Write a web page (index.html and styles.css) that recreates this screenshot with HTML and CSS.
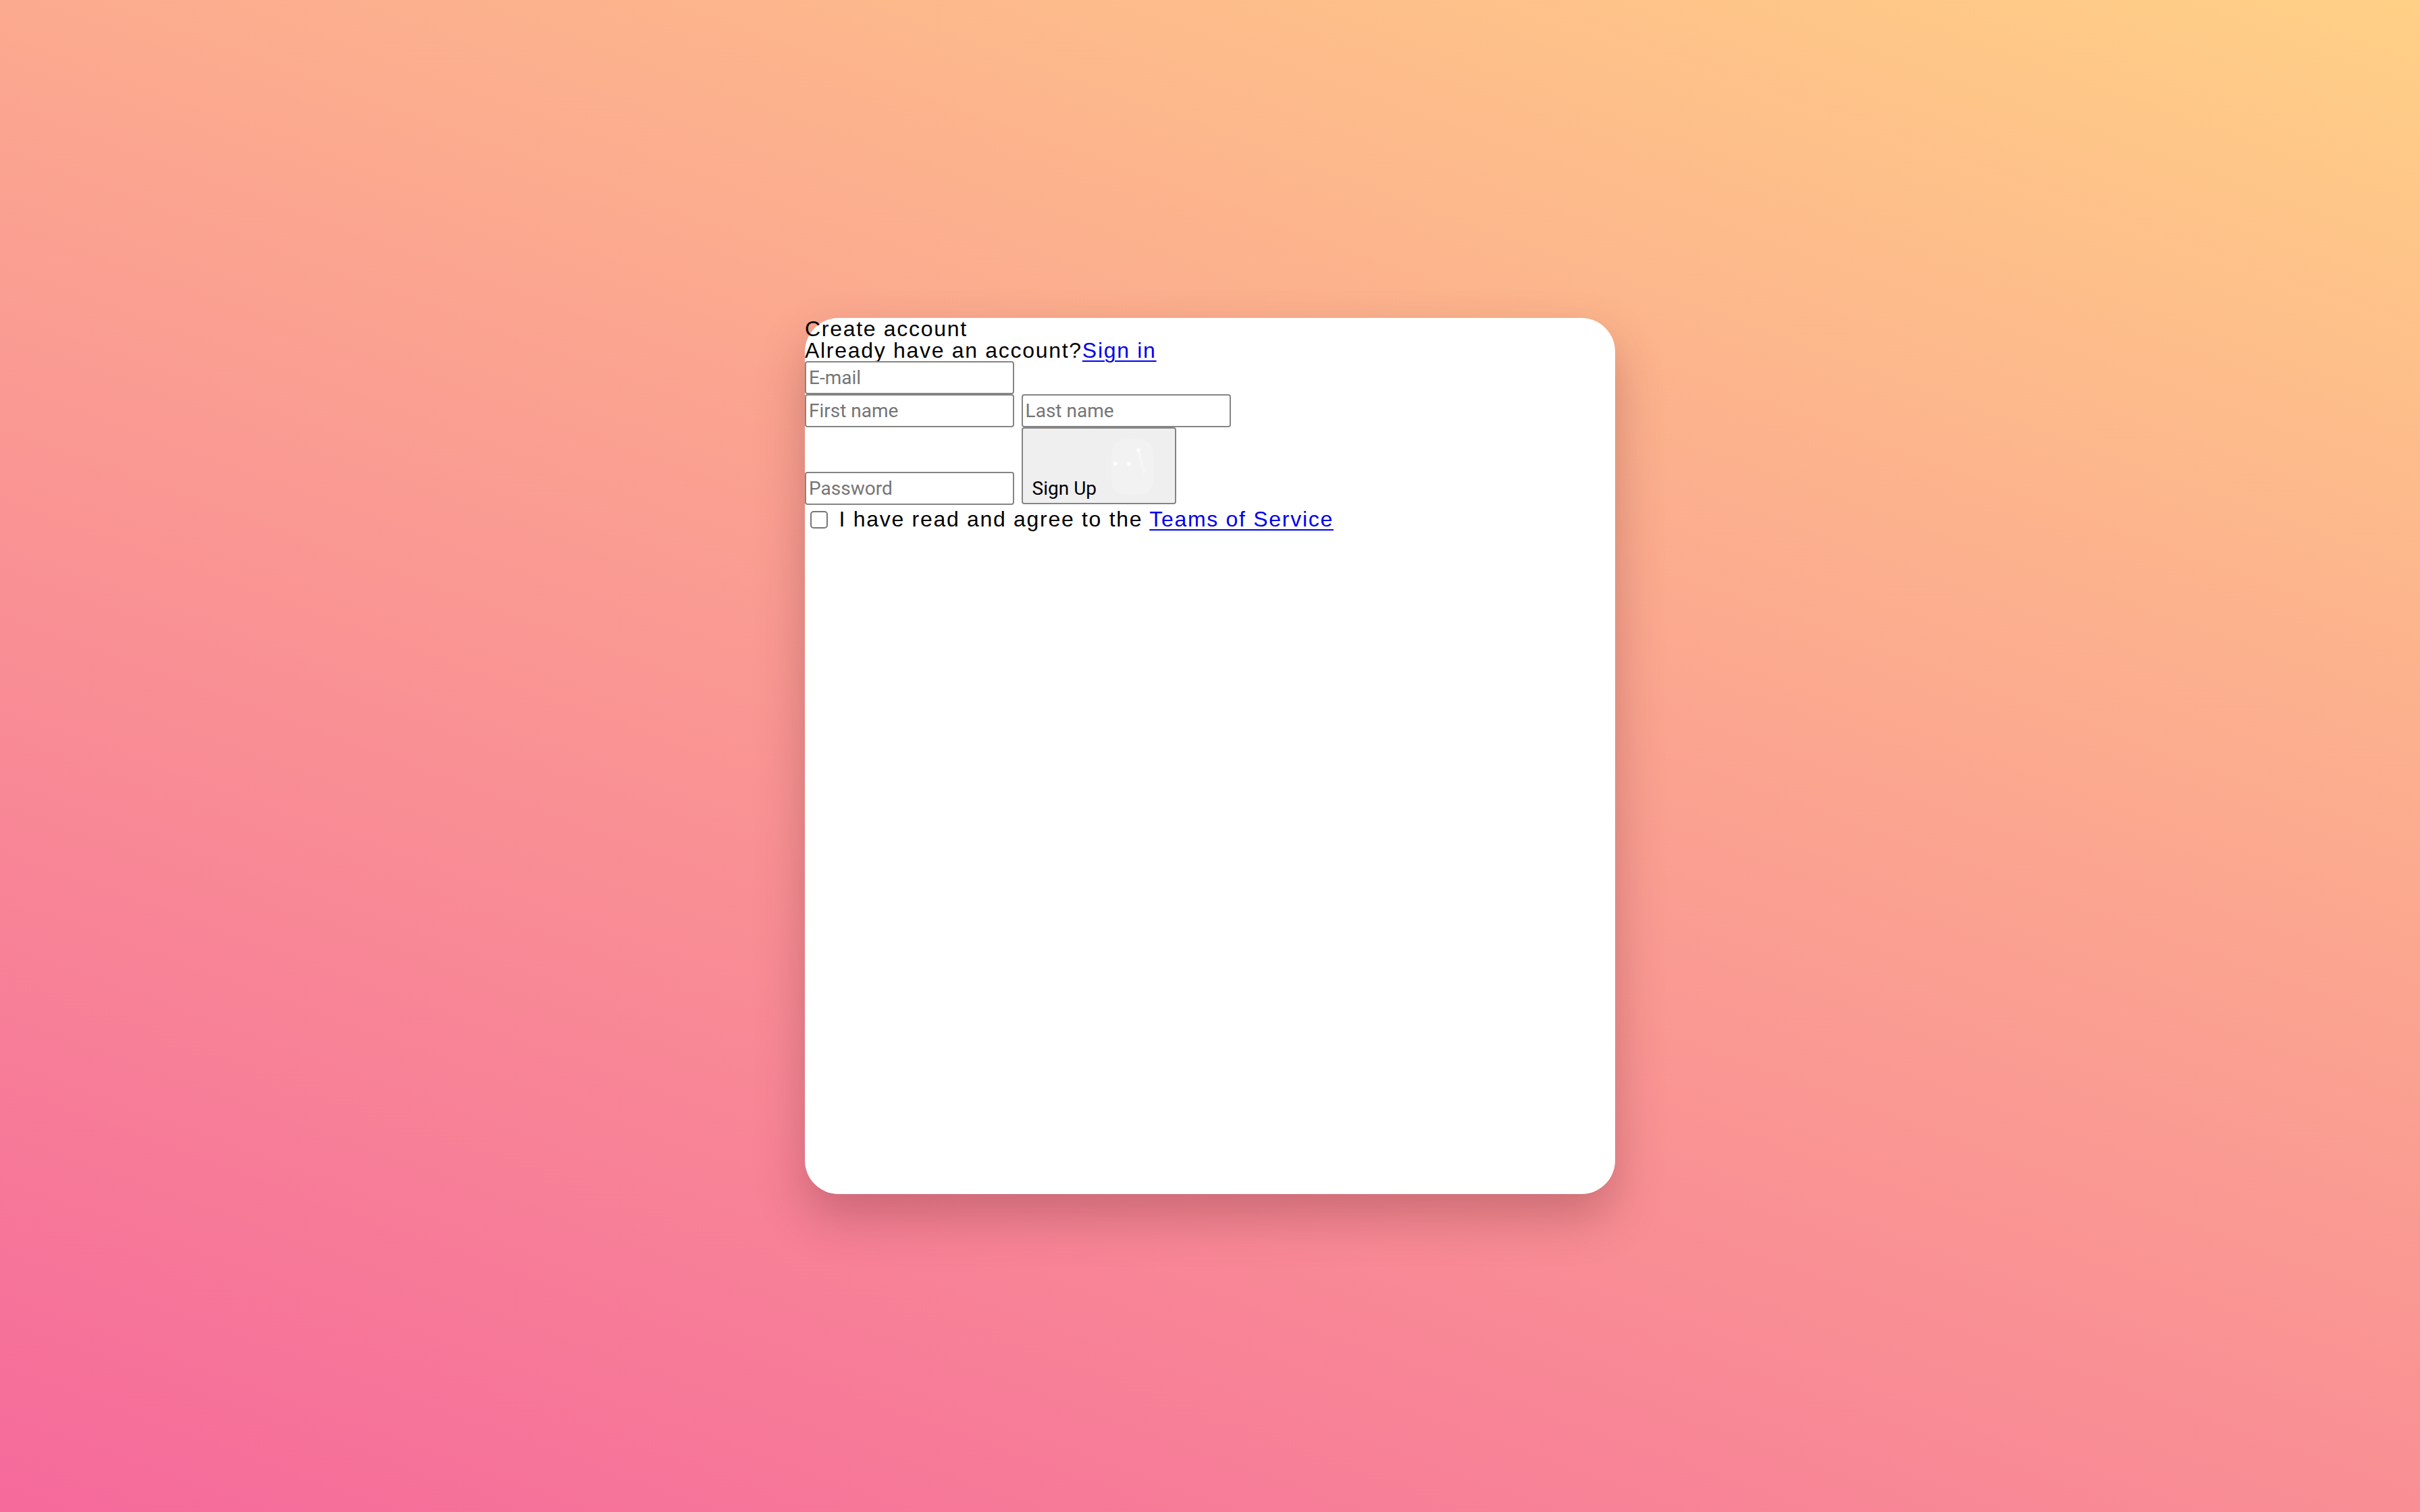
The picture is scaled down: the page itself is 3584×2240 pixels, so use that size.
FILE: index.html
```html
<!DOCTYPE html>
<html lang="en">
<head>
<meta charset="utf-8">
<title>Create account</title>
<link rel="stylesheet" href="styles.css">
</head>
<body>
<main class="page">
  <form class="card">
    <div class="line">Create account</div>
    <div class="line">Already have an account?<a href="#" class="link">Sign in</a></div>
    <div class="row"><input class="field" type="email" placeholder="E-mail"></div>
    <div class="row"><input class="field" type="text" placeholder="First name"> <input class="field" type="text" placeholder="Last name"></div>
    <div class="row"><input class="field" type="password" placeholder="Password"> <button class="submit" type="button">Sign Up<svg class="spark" viewBox="0 0 104 96" aria-hidden="true"><rect x="22" y="14" width="62" height="82" rx="20" fill="#ffffff" opacity="0.18"/><circle cx="28" cy="50" r="3" fill="#ffffff" opacity="0.8"/><circle cx="48" cy="50" r="3" fill="#ffffff" opacity="0.8"/><circle cx="62" cy="30" r="3" fill="#ffffff" opacity="0.8"/><path d="M62 30 L70 62" stroke="#ffffff" stroke-width="4" stroke-linecap="round" opacity="0.35"/></svg></button></div>
    <label class="row agree"><input class="check" type="checkbox"> I have read and agree to the <a class="link" href="#">Teams of Service</a></label>
  </form>
</main>
</body>
</html>
```

FILE: styles.css
```css
* {
  box-sizing: border-box;
}

html,
body {
  margin: 0;
  padding: 0;
}

body {
  font-family: "Liberation Sans", Arial, sans-serif;
  font-size: 32px;
  line-height: 32px;
  letter-spacing: 1.7px;
  color: #000;
}

.page {
  min-height: 100vh;
  display: flex;
  align-items: center;
  justify-content: center;
  background: linear-gradient(20deg, #f5699b 0%, #fa9c92 50%, #ffd086 100%);
}

.card {
  width: 1200px;
  height: 1298px;
  background: #fff;
  border-radius: 50px;
  box-shadow: 0 34px 70px rgba(110, 40, 50, 0.32);
}

.line {
  height: 32px;
  white-space: nowrap;
}

.row {
  display: block;
  white-space: nowrap;
}

.field {
  width: 310px;
  height: 49px;
  margin: 0;
  padding: 2px 4px;
  border: 2px solid #858585;
  border-radius: 4px;
  background: #fff;
  font-family: Roboto, "Liberation Sans", sans-serif;
  font-size: 28px;
  letter-spacing: 0;
  color: #000;
  vertical-align: baseline;
}

.field::placeholder {
  color: #757575;
}

.submit {
  margin: 0;
  padding: 2px 12px 2px 14px;
  border: 2px solid #858585;
  border-radius: 4px;
  background: #efefef;
  font-family: Roboto, "Liberation Sans", sans-serif;
  font-size: 28px;
  line-height: 38px;
  letter-spacing: 0;
  color: #000;
  vertical-align: baseline;
}

.spark {
  width: 104px;
  height: 96px;
  vertical-align: baseline;
}

.agree {
  padding-top: 5px;
}

.check {
  appearance: none;
  width: 26px;
  height: 26px;
  margin: 0 6px 0 8px;
  border: 2px solid #767676;
  border-radius: 5px;
  background: #fff;
  vertical-align: -3px;
}

.link {
  color: #0000ee;
  text-decoration: underline;
  text-decoration-thickness: 2px;
  text-underline-offset: 4px;
}
```
